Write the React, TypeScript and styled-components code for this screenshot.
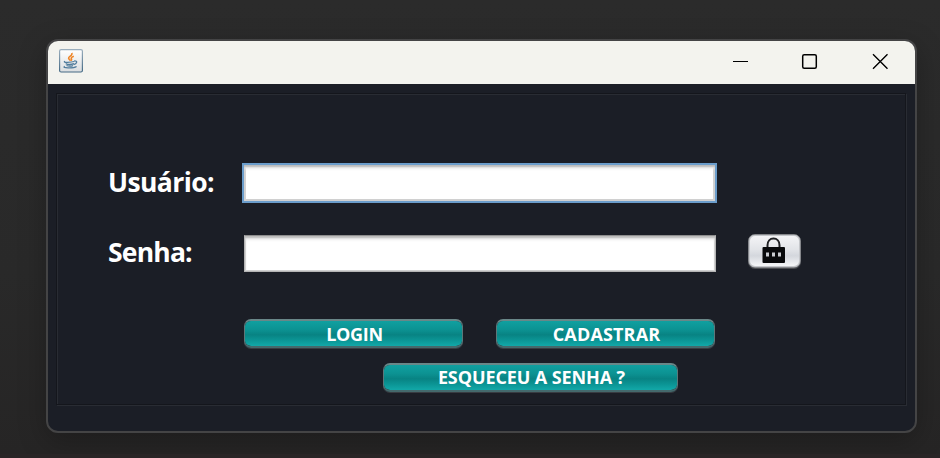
import React from "react";
import styled, { createGlobalStyle } from "styled-components";

const GlobalStyle = createGlobalStyle`
  * { box-sizing: border-box; }
  body { margin: 0; overflow: hidden; background: #272727; }
`;

const Desktop = styled.div`
  width: 940px;
  height: 458px;
  padding: 39px 0 0 46px;
  background: linear-gradient(#2b2b2b, #292929 60%, #262525);
  border-bottom: 4px solid #292526;
  font-family: "Open Sans", "Segoe UI", sans-serif;
  overflow: hidden;
`;

const Window = styled.div`
  width: 871px;
  height: 394px;
  border: 2px solid #444445;
  border-radius: 12px;
  background: #1b1e26;
  overflow: hidden;
  box-shadow: 0 8px 28px rgba(0, 0, 0, 0.25);
`;

const TitleBar = styled.header`
  height: 43px;
  display: flex;
  align-items: center;
  justify-content: space-between;
  padding: 0 26px 3px 11px;
  background: #f3f3ee;
`;

const Controls = styled.div`
  display: flex;
  gap: 52px;
`;

const ControlButton = styled.button`
  width: 18px;
  height: 18px;
  padding: 0;
  border: 0;
  background: none;
  svg { display: block; }
`;

const Panel = styled.main`
  margin: 9px 9px 0 8px;
  height: 312px;
  border: 1px solid #14161c;
  box-shadow: inset 1px 1px #292c33, 1px 1px #292c33;
  padding: 69px 0 0 51px;
`;

const FieldRow = styled.div<{ $gap?: number }>`
  display: flex;
  align-items: center;
  height: 40px;
  margin-bottom: ${(p) => p.$gap ?? 0}px;
`;

const Label = styled.label<{ $spacing: number }>`
  width: 134px;
  padding-bottom: 3px;
  color: #fff;
  font-size: 26.5px;
  font-weight: 700;
  line-height: 36px;
  white-space: nowrap;
  letter-spacing: ${(p) => p.$spacing}px;
`;

const Input = styled.input<{ $focused?: boolean }>`
  width: ${(p) => (p.$focused ? 475 : 472)}px;
  height: ${(p) => (p.$focused ? 40 : 37)}px;
  margin-left: ${(p) => (p.$focused ? 0 : 2)}px;
  padding: 0 8px;
  border: ${(p) => (p.$focused ? "2px solid #6b9dcb" : "1px solid #b4b4b4")};
  border-top-color: ${(p) => (p.$focused ? "#6b9dcb" : "#8d8d8d")};
  border-radius: 0;
  outline: 0;
  background: #fff;
  box-shadow: inset 0 2px 2px #b9b9b9, inset 0 4px 3px #eeeeee, inset 0 0 0 ${(p) => (p.$focused ? 2 : 1)}px #d0d0d0;
  font: 20px "Open Sans", sans-serif;
`;

const LockButton = styled.button`
  width: 53px;
  height: 34px;
  margin: 0 0 4px 32px;
  padding: 0 2px 2px 0;
  display: flex;
  align-items: center;
  justify-content: center;
  border: 1px solid #85878b;
  border-radius: 7px;
  background: linear-gradient(#f5f5f7, #e2e4e8 45%, #d4d7dd 65%, #f8f9fa);
  box-shadow: inset 0 0 0 1px #c4c6ca, 0 1px #4a4c50;
`;

const Actions = styled.div<{ $start: number; $top: number }>`
  display: flex;
  gap: 33px;
  margin: ${(p) => p.$top}px 0 0 ${(p) => p.$start}px;
`;

const ActionButton = styled.button<{ $width: number; $spacing: number; $drop?: number }>`
  width: ${(p) => p.$width}px;
  height: 29px;
  padding: ${(p) => p.$drop ?? 0}px 0 0 2px;
  border: 1px solid #5d7779;
  border-top: 2px solid #698788;
  border-bottom: 2px solid #44696c;
  border-radius: 7px;
  background: linear-gradient(#10a0a0, #0c9292 35%, #088383 55%, #0b9494 76%, #12a8a8);
  background-clip: padding-box;
  box-shadow: 0 1px #383c42;
  color: #fff;
  font: 700 18px/23px "Open Sans", sans-serif;
  letter-spacing: ${(p) => p.$spacing}px;
  white-space: nowrap;
`;

const JavaIcon = () => (
  <svg width="24" height="24" viewBox="0 0 24 24" fill="none">
    <defs>
      <linearGradient id="tile" x1="0" y1="0" x2="0" y2="1">
        <stop stopColor="#fff" />
        <stop offset="1" stopColor="#dadde0" />
      </linearGradient>
      <linearGradient id="edge" x1="0" y1="0" x2="0" y2="1">
        <stop stopColor="#9aaebd" />
        <stop offset="1" stopColor="#456a85" />
      </linearGradient>
    </defs>
    <rect x=".6" y=".6" width="22.8" height="22.4" rx="1.5" fill="url(#tile)" stroke="url(#edge)" strokeWidth="1.2" />
    <path d="M12.7 4c1.6 2.6-3.4 3.2-3.1 5.2.1 1 1.5 1.7 1.9 2.6M14.8 7.3c-2.1.7-3.1 1.6-2.4 2.5.4.6.2 1.3-.4 1.9" stroke="#ee8529" strokeWidth="1.6" />
    <path d="M6 12.3c-3 1.3 5.5 1.3 9.2.2M6.7 14.6c2 1 6 .9 8.3.1M7.5 16.5c2 .8 4.8.7 6.5.1M15.2 12c4-.5 2.7 2.9-.6 3.6M5.8 17.4c-3.8 1.7 8.4 2.3 11.8.1" stroke="#527d9d" strokeWidth="1.3" />
  </svg>
);

const LockIcon = () => (
  <svg width="24" height="27" viewBox="0 0 24 27" fill="none">
    <path d="M5.5 11V8.2C5.5 4 8 1.6 11.5 1.6S17.5 4 17.5 8.2V11" stroke="#202124" strokeWidth="2" />
    <rect x=".5" y="10" width="22.5" height="16" rx="1" fill="#08090b" />
    <path d="M4 15.5h3v4H4zM10 15.5h3v4h-3zM16 15.5h3v4h-3z" fill="#c9cbd0" />
  </svg>
);

export default function App() {
  return (
    <>
      <GlobalStyle />
      <Desktop>
        <Window>
          <TitleBar>
            <JavaIcon />
            <Controls>
              <ControlButton aria-label="Minimizar">
                <svg width="18" height="18"><path d="M2 9.5h15" stroke="#000" /></svg>
              </ControlButton>
              <ControlButton aria-label="Maximizar">
                <svg width="18" height="18"><rect x="1.7" y="2.7" width="13.6" height="13.6" rx="1.5" fill="none" stroke="#000" strokeWidth="1.5" /></svg>
              </ControlButton>
              <ControlButton aria-label="Fechar">
                <svg width="18" height="18"><path d="M2 2.2l14.5 14.5M16.5 2.2L2 16.7" stroke="#000" strokeWidth="1.4" /></svg>
              </ControlButton>
            </Controls>
          </TitleBar>
          <Panel>
            <FieldRow $gap={30}>
              <Label htmlFor="user" $spacing={-0.6}>Usuário:</Label>
              <Input id="user" $focused />
            </FieldRow>
            <FieldRow>
              <Label htmlFor="password" $spacing={-0.8}>Senha:</Label>
              <Input id="password" type="password" />
              <LockButton aria-label="Mostrar senha"><LockIcon /></LockButton>
            </FieldRow>
            <Actions $start={136} $top={46}>
              <ActionButton $width={219} $spacing={-0.3} $drop={2}>LOGIN</ActionButton>
              <ActionButton $width={219} $spacing={0.15} $drop={2}>CADASTRAR</ActionButton>
            </Actions>
            <Actions $start={275} $top={15}>
              <ActionButton $width={295} $spacing={-0.1}>ESQUECEU A SENHA ?</ActionButton>
            </Actions>
          </Panel>
        </Window>
      </Desktop>
    </>
  );
}
